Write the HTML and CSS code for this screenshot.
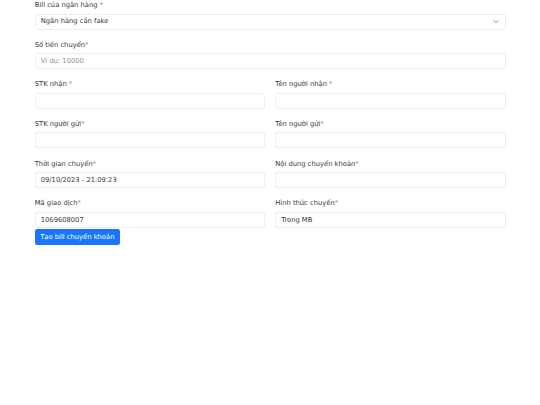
FILE: index.html
```html
<!DOCTYPE html>
<html lang="vi">
<head>
<meta charset="utf-8">
<title>Tạo bill chuyển khoản</title>
<link rel="stylesheet" href="styles.css">
</head>
<body>
<div class="container">
  <div class="group">
    <label class="label">Bill của ngân hàng <span class="req">*</span></label>
    <div class="control select">
      <span>Ngân hàng cần fake</span>
      <svg class="chev" viewBox="0 0 16 16" width="6" height="5" preserveAspectRatio="none"><path d="m2 5 6 6 6-6" fill="none" stroke="#5a6068" stroke-width="2" stroke-linecap="round" stroke-linejoin="round"/></svg>
    </div>
  </div>
  <div class="group">
    <label class="label">Số tiền chuyển<span class="req">*</span></label>
    <div class="control placeholder">Ví dụ: 10000</div>
  </div>
  <div class="grid">
    <div class="group">
      <label class="label">STK nhận <span class="req">*</span></label>
      <div class="control"></div>
    </div>
    <div class="group">
      <label class="label">Tên người nhận <span class="req">*</span></label>
      <div class="control"></div>
    </div>
    <div class="group">
      <label class="label">STK người gửi<span class="req">*</span></label>
      <div class="control"></div>
    </div>
    <div class="group">
      <label class="label">Tên người gửi<span class="req">*</span></label>
      <div class="control"></div>
    </div>
    <div class="group">
      <label class="label">Thời gian chuyển<span class="req">*</span></label>
      <div class="control">09/10/2023 - 21:09:23</div>
    </div>
    <div class="group">
      <label class="label">Nội dung chuyển khoản<span class="req">*</span></label>
      <div class="control"></div>
    </div>
    <div class="group last">
      <label class="label">Mã giao dịch<span class="req">*</span></label>
      <div class="control">1069608007</div>
    </div>
    <div class="group last">
      <label class="label">Hình thức chuyển<span class="req">*</span></label>
      <div class="control">Trong MB</div>
    </div>
  </div>
  <button class="btn">Tạo bill chuyển khoản</button>
</div>
</body>
</html>
```
FILE: styles.css
```css
html, body {
  margin: 0;
  padding: 0;
  background: #fff;
}
body {
  font-family: "DejaVu Sans", "Noto Sans", sans-serif;
  font-size: 6.75px;
  line-height: 10.125px;
  color: #33383d;
}
.container {
  width: 471px;
  margin: 0 auto;
  padding-left: 0.5px;
}
.group {
  margin-bottom: 10.125px;
}
.group.last {
  margin-bottom: 0;
}
.label {
  display: block;
  height: 10.125px;
  margin-bottom: 3.375px;
}
.req {
  color: #e0606c;
}
.control {
  box-sizing: border-box;
  height: 16px;
  border: 1px solid #eceef1;
  border-radius: 2.5px;
  padding: 0 5px;
  display: flex;
  align-items: center;
  background: #fff;
}
.select {
  justify-content: space-between;
}
.chev {
  margin-right: 1px;
  display: block;
}
.placeholder {
  color: #8a8f95;
}
.grid {
  display: grid;
  grid-template-columns: 1fr 1fr;
  column-gap: 10px;
}
.btn {
  display: block;
  margin-top: 1px;
  height: 16px;
  padding: 0 5.5px;
  border: 0;
  border-radius: 2.5px;
  background: #1a75fd;
  color: #fff;
  font-family: inherit;
  font-size: 6.75px;
  line-height: 10.125px;
}
```
